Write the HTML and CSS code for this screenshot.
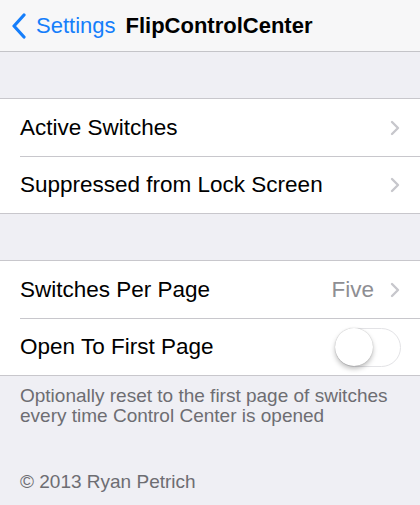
FILE: index.html
```html
<!DOCTYPE html>
<html>
<head>
<meta charset="utf-8">
<link rel="stylesheet" href="styles.css">
</head>
<body>
<div class="nav">
  <span class="back">
    <svg class="back-chev" width="16" height="26" viewBox="0 0 16 26"><path d="M13 2 L3 13 L13 24" fill="none" stroke="#157efb" stroke-width="3.2" stroke-linecap="round" stroke-linejoin="round"/></svg>
    <span class="back-label">Settings</span>
  </span>
  <span class="title">FlipControlCenter</span>
</div>
<div class="gap"></div>
<div class="group">
  <div class="row">
    <span class="label">Active Switches</span>
    <svg class="chev" width="10" height="16" viewBox="0 0 10 16"><path d="M2 2 L8 8 L2 14" fill="none" stroke="#c7c7cc" stroke-width="2.4" stroke-linecap="round" stroke-linejoin="round"/></svg>
  </div>
  <div class="row">
    <span class="label">Suppressed from Lock Screen</span>
    <svg class="chev" width="10" height="16" viewBox="0 0 10 16"><path d="M2 2 L8 8 L2 14" fill="none" stroke="#c7c7cc" stroke-width="2.4" stroke-linecap="round" stroke-linejoin="round"/></svg>
  </div>
</div>
<div class="gap"></div>
<div class="group">
  <div class="row">
    <span class="label">Switches Per Page</span>
    <span class="value">Five</span>
    <svg class="chev" width="10" height="16" viewBox="0 0 10 16"><path d="M2 2 L8 8 L2 14" fill="none" stroke="#c7c7cc" stroke-width="2.4" stroke-linecap="round" stroke-linejoin="round"/></svg>
  </div>
  <div class="row">
    <span class="label">Open To First Page</span>
    <span class="toggle"><span class="knob"></span></span>
  </div>
</div>
<div class="footer">Optionally reset to the first page of switches every time Control Center is opened</div>
<div class="copyright">© 2013 Ryan Petrich</div>
</body>
</html>
```
FILE: styles.css
```css
html, body {
  margin: 0;
  padding: 0;
}
body {
  background: #efeff4;
  font-family: "Liberation Sans", Arial, sans-serif;
  width: 420px;
  height: 505px;
  overflow: hidden;
}
.nav {
  height: 52px;
  background: #f7f7f8;
  border-bottom: 1px solid #c4c4c8;
  box-sizing: border-box;
  display: flex;
  align-items: center;
  padding-left: 11px;
}
.back {
  display: flex;
  align-items: center;
  color: #157efb;
  font-size: 22px;
}
.back-chev {
  display: block;
}
.back-label {
  margin-left: 9px;
}
.title {
  margin-left: 10px;
  font-size: 22px;
  font-weight: bold;
  color: #000;
}
.gap {
  height: 46px;
}
.group {
  background: #fff;
  border-top: 1px solid #c8c7cc;
  border-bottom: 1px solid #c8c7cc;
}
.row {
  height: 57px;
  box-sizing: border-box;
  display: flex;
  align-items: center;
  padding-left: 20px;
  padding-right: 20px;
  position: relative;
}
.row + .row {
  border-top: 1px solid #c8c7cc;
  margin-left: 20px;
  padding-left: 0;
}
.label {
  flex: 1;
  font-size: 22.5px;
  color: #000;
}
.value {
  font-size: 22.5px;
  color: #8e8e93;
  margin-right: 16px;
}
.chev {
  display: block;
}
.toggle {
  width: 66px;
  height: 39px;
  border-radius: 20px;
  border: 1.5px solid #e3e3e6;
  box-sizing: border-box;
  background: #fff;
  position: relative;
  margin-right: -1px;
}
.knob {
  position: absolute;
  left: -1px;
  top: -1px;
  width: 38px;
  height: 38px;
  border-radius: 50%;
  background: #fff;
  box-shadow: 0 3px 5px rgba(0,0,0,0.25), 0 0 1px rgba(0,0,0,0.3);
}
.footer {
  padding: 10px 20px 0 20px;
  font-size: 19px;
  line-height: 20px;
  color: #6d6d72;
}
.copyright {
  padding: 46px 20px 0 20px;
  font-size: 19px;
  line-height: 20px;
  color: #6d6d72;
}
```
